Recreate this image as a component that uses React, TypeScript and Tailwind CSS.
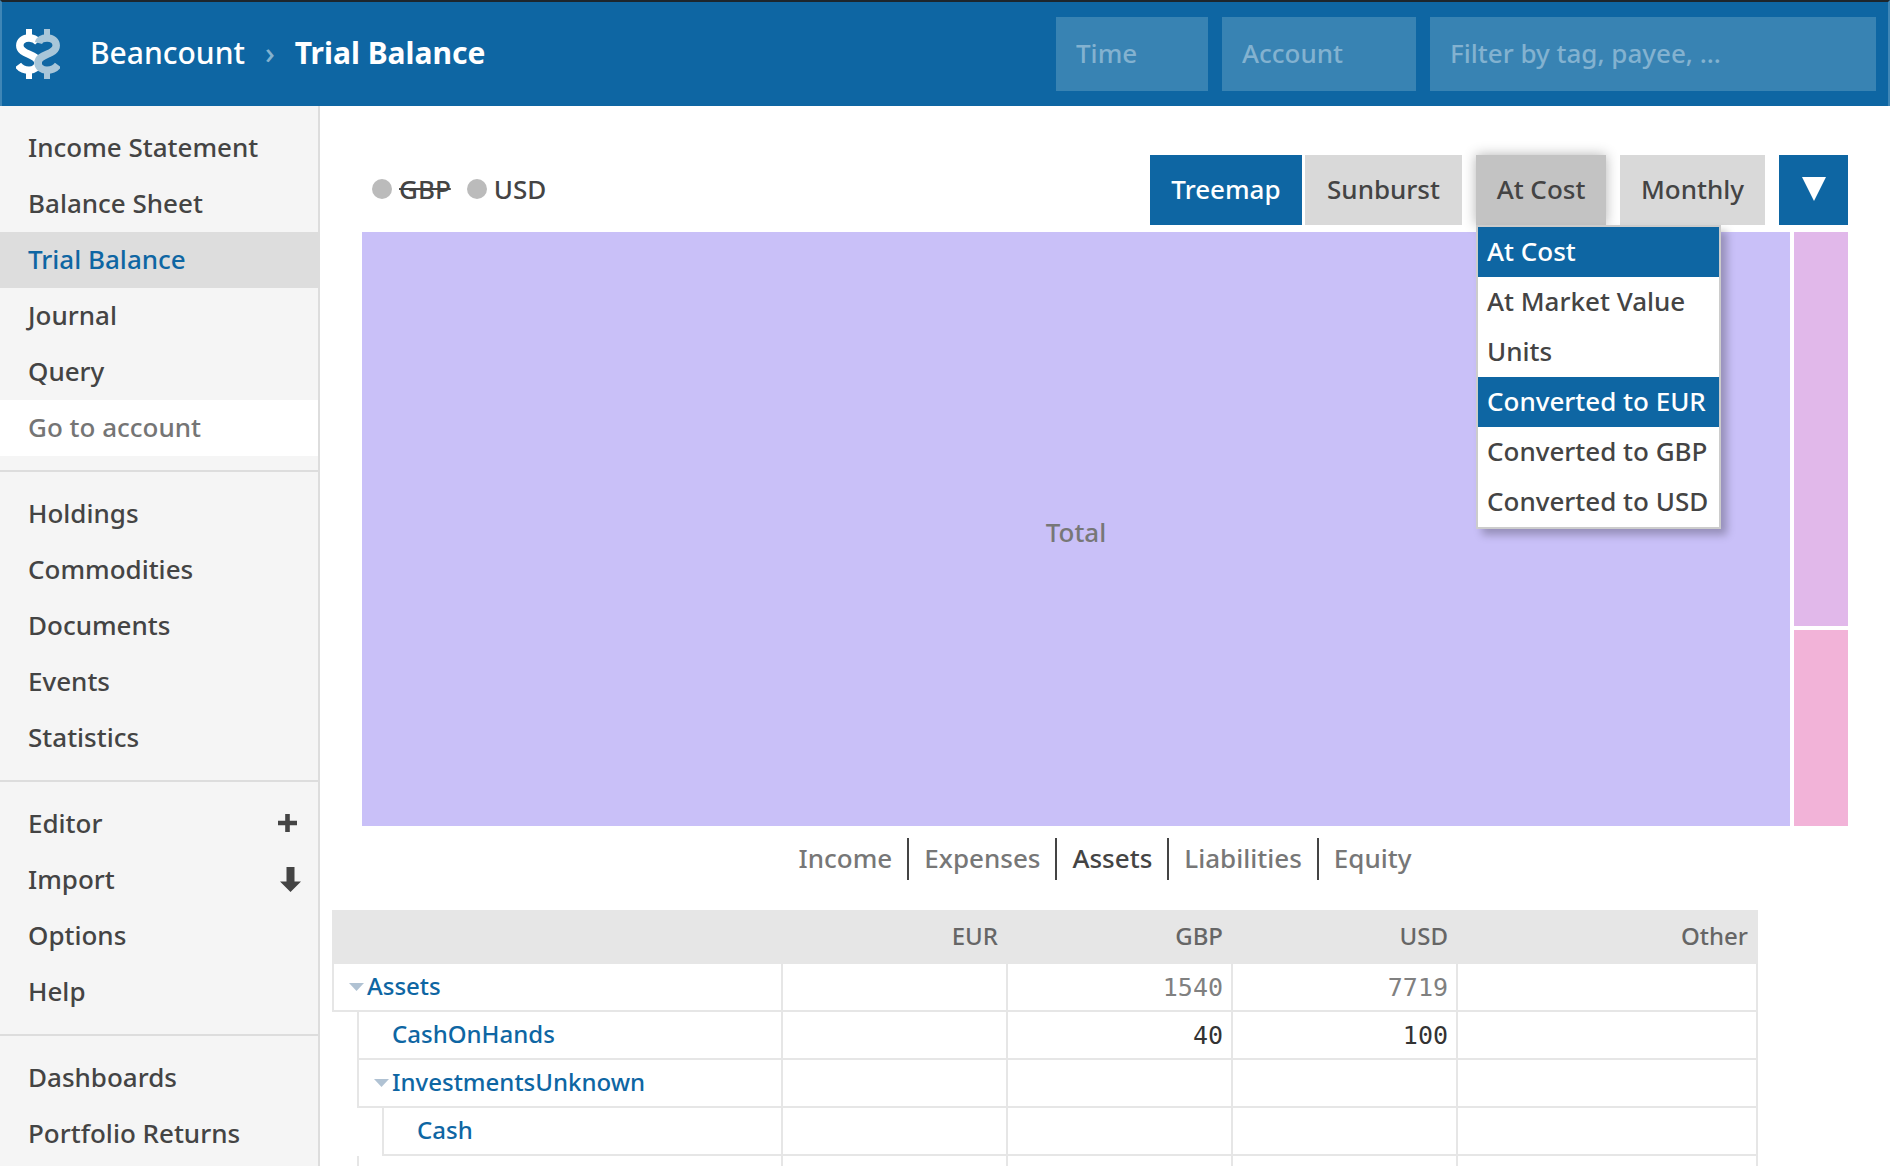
import { useState } from 'react'

const NAV = [
  ['Income Statement', 'Balance Sheet', 'Trial Balance', 'Journal', 'Query'],
  ['Holdings', 'Commodities', 'Documents', 'Events', 'Statistics'],
  ['Editor', 'Import', 'Options', 'Help'],
  ['Dashboards', 'Portfolio Returns'],
]

const CONVERSIONS = [
  'At Cost',
  'At Market Value',
  'Units',
  'Converted to EUR',
  'Converted to GBP',
  'Converted to USD',
]

const TABS = ['Income', 'Expenses', 'Assets', 'Liabilities', 'Equity']

const CURRENCIES = ['EUR', 'GBP', 'USD', 'Other']

type Row = { account: string; depth: number; open?: boolean; values: string[] }

const ROWS: Row[] = [
  { account: 'Assets', depth: 0, open: true, values: ['', '1540', '7719', ''] },
  { account: 'CashOnHands', depth: 1, values: ['', '40', '100', ''] },
  { account: 'InvestmentsUnknown', depth: 1, open: true, values: ['', '', '', ''] },
  { account: 'Cash', depth: 2, values: ['', '', '', ''] },
  { account: '', depth: 1, values: ['', '', '', ''] },
]

const INDENT = ['', 'ml-[25px]', 'ml-[50px]']

function Logo() {
  return (
    <svg viewBox="0 0 44 50" className="h-[50px] w-[44px]" fill="none" aria-hidden="true">
      <g stroke="#fff">
        <path strokeWidth="6" d="M13 0v8M13 43v7" />
        <path
          strokeWidth="7.5"
          d="M22 13C19.500 10 16.500 9 13 9C7.500 9 3.800 12 3.800 16.500C3.800 26.500 22 24 22 34C22 38 18 41.200 13 41.200C8.500 41.200 4.500 39.500 2 36"
        />
      </g>
      <g stroke="#a8c6d9">
        <path strokeWidth="6" d="M31 0v8M31 43v7" />
        <path
          strokeWidth="7.500"
          d="M22.500 14C23.500 10.500 27 9 31 9C36.500 9 40.200 12 40.200 16.500C40.200 26.500 22 24 22 34C22 38 26 41.200 31 41.200C35.500 41.200 39.500 39.500 42 36"
        />
      </g>
    </svg>
  )
}

function Header() {
  const field =
    'h-[74px] bg-[#3883b3] px-5 pb-0.5 text-[26px] text-white outline-none placeholder:text-[#83b2d0]'
  return (
    <header className="flex h-[106px] shrink-0 items-center border-x-2 border-t-2 border-x-[#3f86b6] border-t-[#1d262d] bg-[#0e66a3] pr-3 pl-3.5 text-white">
      <Logo />
      <h1 className="ml-[30px] flex items-center pb-0.5 text-[30px] whitespace-nowrap">
        <a href="#beancount">Beancount</a>
        <span className="mx-5 text-[#83b2d0]">›</span>
        <strong className="font-bold">Trial Balance</strong>
      </h1>
      <form className="ml-auto flex gap-3.5">
        <input aria-label="Time" placeholder="Time" className={`${field} w-[152px]`} />
        <input aria-label="Account" placeholder="Account" className={`${field} w-[194px]`} />
        <input aria-label="Filter" placeholder="Filter by tag, payee, ..." className={`${field} w-[446px]`} />
      </form>
    </header>
  )
}

function NavIcon({ name }: { name: string }) {
  if (name === 'Editor') {
    return (
      <button aria-label="Add entry" className="mr-[21px]">
        <svg viewBox="0 0 19 18" className="h-[18px] w-[19px]" fill="#444">
          <path d="M7.200 0h4.600v6.700H19v4.600h-7.200V18H7.200v-6.700H0V6.700h7.200z" />
        </svg>
      </button>
    )
  }
  if (name === 'Import') {
    return (
      <svg viewBox="0 0 21 25" className="mr-[17px] h-[25px] w-[21px]" fill="#444">
        <path d="M6.500 0h8v14.500H21L10.500 25 0 14.500h6.500z" />
      </svg>
    )
  }
  return null
}

function Sidebar() {
  return (
    <aside className="w-[320px] shrink-0 overflow-hidden border-r-2 border-[#ddd] bg-[#f5f5f5]">
      {NAV.map((group, i) => (
        <ul key={i} className={`py-3.5 ${i > 0 ? 'border-t-2 border-[#ddd]' : ''}`}>
          {group.map((name) => (
            <li
              key={name}
              className={`flex h-14 items-center justify-between pb-0.5 ${name === 'Trial Balance' ? 'bg-[#ddd] text-[#0e66a3]' : ''}`}
            >
              <a href="#" className="flex-1 pl-7">{name}</a>
              <NavIcon name={name} />
            </li>
          ))}
          {i === 0 && (
            <li>
              <input
                aria-label="Go to account"
                placeholder="Go to account"
                className="block h-14 w-full bg-white px-7 pb-0.5 outline-none placeholder:text-[#757575]"
              />
            </li>
          )}
        </ul>
      ))}
    </aside>
  )
}

function ConversionSelect() {
  const [value, setValue] = useState('At Cost')
  const [hovered, setHovered] = useState('Converted to EUR')
  return (
    <div className="relative">
      <button
        aria-haspopup="listbox"
        aria-expanded="true"
        className="h-[70px] w-[130px] bg-[#c3c3c3] pb-0.5 shadow-[0_0_12px_rgba(0,0,0,0.3)]"
      >
        {value}
      </button>
      <ul
        role="listbox"
        aria-label="Conversion"
        className="absolute top-full left-0 z-10 w-[245px] border-2 border-[#ccc] bg-white shadow-[6px_6px_8px_rgba(0,0,0,0.25)]"
      >
        {CONVERSIONS.map((c) => (
          <li
            key={c}
            role="option"
            aria-selected={c === value}
            onClick={() => setValue(c)}
            onMouseEnter={() => setHovered(c)}
            className={`flex h-[50px] items-center pb-0.5 pl-[9px] whitespace-nowrap ${c === value || c === hovered ? 'bg-[#0e66a3] text-white' : ''}`}
          >
            {c}
          </li>
        ))}
      </ul>
    </div>
  )
}

function ChartControls() {
  return (
    <div className="flex h-[70px] items-center justify-between">
      <div className="flex gap-4 pb-0.5 pl-2.5">
        <button className="flex items-center gap-[7px]">
          <i className="size-5 rounded-full bg-[#bbb]" />
          <span className="line-through">GBP</span>
        </button>
        <button className="flex items-center gap-[7px]">
          <i className="size-5 rounded-full bg-[#bbb]" />
          USD
        </button>
      </div>
      <div className="flex gap-3.5">
        <div className="flex gap-[3px]">
          <button className="h-[70px] w-[152px] bg-[#0e66a3] pb-0.5 text-white">Treemap</button>
          <button className="h-[70px] w-[157px] bg-[#d9d9d9] pb-0.5">Sunburst</button>
        </div>
        <ConversionSelect />
        <select aria-label="Interval" className="h-[70px] w-[145px] appearance-none bg-[#d9d9d9] pb-0.5 text-center">
          <option>Monthly</option>
        </select>
        <button aria-label="Toggle chart" className="flex h-[70px] w-[69px] items-center justify-center bg-[#0e66a3] pb-0.5">
          <svg viewBox="0 0 24 24" className="size-6" fill="#fff">
            <path d="M0 0h24L12 24z" />
          </svg>
        </button>
      </div>
    </div>
  )
}

function Treemap() {
  return (
    <div className="mt-[7px] flex h-[594px] gap-1">
      <div className="flex flex-1 items-center justify-center bg-[#c9c0f8] pt-1.5 text-[#777]">Total</div>
      <div className="flex w-[54px] flex-col gap-1">
        <div className="flex-1 bg-[#e1b8ea]" />
        <div className="h-[196px] bg-[#f2b3d8]" />
      </div>
    </div>
  )
}

function TreeTable() {
  return (
    <table className="mt-[30px] -ml-[30px] w-[1426px] table-fixed border-separate border-spacing-0 text-[24px]">
      <colgroup>
        <col className="w-[451px]" />
        <col className="w-[225px]" />
        <col className="w-[225px]" />
        <col className="w-[225px]" />
        <col className="w-[300px]" />
      </colgroup>
      <thead>
        <tr className="h-[54px] bg-[#e6e6e6] text-[#666]">
          <th aria-label="Account" />
          {CURRENCIES.map((c) => (
            <th key={c} className="p-0 pr-2.5 pb-0.5 text-right font-medium">{c}</th>
          ))}
        </tr>
      </thead>
      <tbody>
        {ROWS.map((row, i) => (
          <tr key={i} className="h-12">
            <td className="p-0">
              <div className={`flex h-12 items-center border-r-2 border-b-2 border-l-2 border-[#e6e6e6] pl-[15px] ${INDENT[row.depth]}`}>
                <svg viewBox="0 0 15 8" className="mr-[3px] h-2 w-[15px]" fill="#b0c2d3">
                  {row.open && <path d="M0 0h15L7.500 8z" />}
                </svg>
                <a href="#" className="pb-0.5 text-[#0e66a3]">{row.account}</a>
              </div>
            </td>
            {row.values.map((v, j) => (
              <td
                key={j}
                className={`border-r-2 border-b-2 border-[#e6e6e6] p-0 pr-2 text-right font-['DejaVu_Sans_Mono',monospace] text-[25px] leading-none font-normal ${row.depth === 0 ? 'text-[#808080]' : 'text-[#333]'}`}
              >
                {v}
              </td>
            ))}
          </tr>
        ))}
      </tbody>
    </table>
  )
}

export default function App() {
  return (
    <div className="flex h-screen flex-col overflow-hidden bg-white font-['Noto_Sans',sans-serif] text-[26px] leading-9 font-medium text-[#444]">
      <Header />
      <div className="flex min-h-0 flex-1">
        <Sidebar />
        <main className="min-w-0 flex-1 overflow-hidden px-[42px] pt-[49px]">
          <ChartControls />
          <Treemap />
          <nav className="mt-3 flex justify-center">
            {TABS.map((tab, i) => (
              <button
                key={tab}
                className={`h-[42px] px-[15px] pb-0.5 ${i > 0 ? 'border-l-2 border-[#444]' : ''} ${tab === 'Assets' ? 'text-[#444]' : 'text-[#777]'}`}
              >
                {tab}
              </button>
            ))}
          </nav>
          <TreeTable />
        </main>
      </div>
    </div>
  )
}
